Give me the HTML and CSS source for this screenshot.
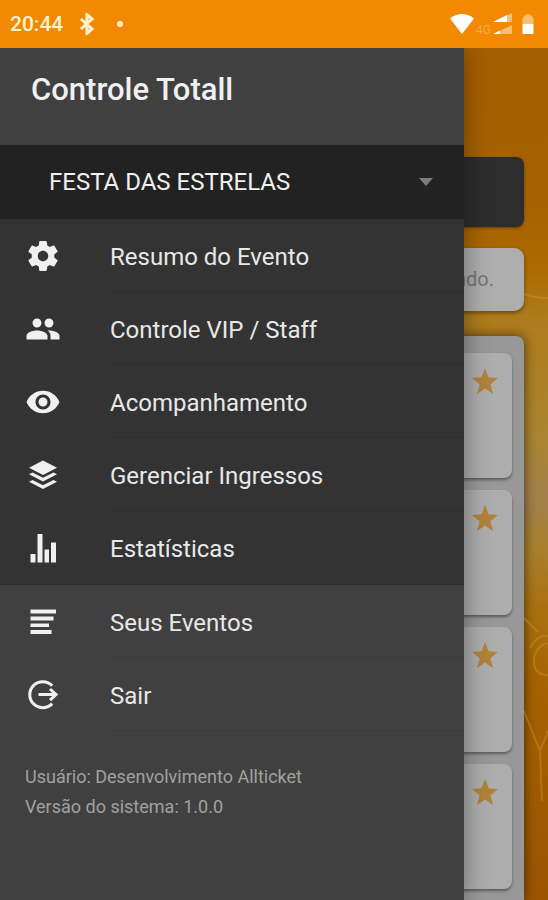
FILE: index.html
```html
<!DOCTYPE html>
<html lang="pt-BR">
<head>
<meta charset="utf-8">
<meta name="viewport" content="width=device-width, initial-scale=1">
<title>Controle Totall</title>
<link rel="stylesheet" href="styles.css">
</head>
<body>
<header class="status">
  <div class="status-left">
    <span class="clock">20:44</span>
    <svg class="bluetooth" viewBox="0 0 16 22"><path d="M2 6l11 10-5 4.500V1.500L13 6 2 16"/></svg>
    <span class="dot"></span>
  </div>
  <div class="status-right">
    <svg class="wifi" viewBox="0 0 24 20"><path d="M0 4.500C7-1.500 17-1.500 24 4.500L12 20z"/></svg>
    <span class="network">4G</span>
    <svg class="signal" viewBox="0 0 20 22"><g class="faint"><path d="M1 9L20 0v9z"/><path d="M1 21l19-9v9z"/></g><path d="M1 9l14-7V9z"/><path d="M1 21l7-3.500V21z"/></svg>
    <svg class="battery" viewBox="0 0 11 20"><path class="faint" d="M0 5q0-2 3-4 2.500-2 5 0 3 2 3 4v5H0z"/><path d="M0 10h11v10H0z"/></svg>
  </div>
</header>
<div class="stage">
  <main class="page">
    <svg class="sparks" viewBox="0 0 24 852" preserveAspectRatio="none"><path d="M0 246q12 4 24 4M0 663l16 40 2 50M16 703l8-20M24 595q-14 4-14 18t14 14M0 570l14 14M6 600q8-14 18-12"/></svg>
    <div class="banner"></div>
    <div class="notice">ndo.</div>
    <section class="list">
      <article class="card"><svg class="star" viewBox="0 0 26 26"><path d="M13 0l3.600 9.300L26 10l-7.500 6.300L21 26l-8-5.400L5 26l2.500-9.700L0 10l9.400-.7z"/></svg></article>
      <article class="card"><svg class="star" viewBox="0 0 26 26"><path d="M13 0l3.600 9.300L26 10l-7.500 6.300L21 26l-8-5.400L5 26l2.500-9.700L0 10l9.400-.7z"/></svg></article>
      <article class="card"><svg class="star" viewBox="0 0 26 26"><path d="M13 0l3.600 9.300L26 10l-7.500 6.300L21 26l-8-5.400L5 26l2.500-9.700L0 10l9.400-.7z"/></svg></article>
      <article class="card"><svg class="star" viewBox="0 0 26 26"><path d="M13 0l3.600 9.300L26 10l-7.500 6.300L21 26l-8-5.400L5 26l2.500-9.700L0 10l9.400-.7z"/></svg></article>
    </section>
  </main>
  <aside class="drawer">
    <h1 class="title">Controle Totall</h1>
    <div class="picker">
      <select class="event" aria-label="Evento"><option>FESTA DAS ESTRELAS</option></select>
      <svg class="caret" viewBox="0 0 14 8"><path d="M0 0h14L7 8z"/></svg>
    </div>
    <nav>
      <div class="group event-group">
        <a class="item" href="#resumo"><svg class="icon" viewBox="0 0 24 24"><path d="M19.430 12.980c.040-.320.070-.640.070-.980s-.030-.660-.070-.980l2.110-1.650c.190-.150.240-.420.120-.640l-2-3.460c-.120-.220-.390-.300-.610-.220l-2.490 1c-.520-.400-1.080-.730-1.690-.980l-.380-2.650C14.460 2.180 14.250 2 14 2h-4c-.250 0-.460.180-.490.420l-.380 2.650c-.610.250-1.170.590-1.690.980l-2.490-1c-.230-.090-.490 0-.610.220l-2 3.460c-.130.220-.070.490.120.640l2.110 1.650c-.040.320-.070.650-.070.980s.030.660.070.980l-2.110 1.650c-.190.150-.240.420-.120.640l2 3.460c.120.220.390.300.610.220l2.490-1c.520.400 1.080.730 1.690.980l.380 2.650c.030.240.240.420.490.420h4c.250 0 .460-.180.490-.420l.380-2.650c.610-.250 1.170-.590 1.690-.980l2.490 1c.230.090.490 0 .610-.220l2-3.460c.120-.220.070-.490-.120-.640l-2.110-1.650zM12 15.500c-1.930 0-3.500-1.570-3.500-3.500s1.570-3.500 3.500-3.500 3.500 1.570 3.500 3.500-1.570 3.500-3.500 3.500z"/></svg><span class="label">Resumo do Evento</span></a>
        <a class="item" href="#vip"><svg class="icon" viewBox="0 0 24 24"><path d="M16 11c1.660 0 2.990-1.340 2.990-3S17.660 5 16 5s-3 1.340-3 3 1.340 3 3 3zm-8 0c1.660 0 2.990-1.340 2.990-3S9.660 5 8 5 5 6.340 5 8s1.340 3 3 3zm0 2c-2.330 0-7 1.170-7 3.500V19h14v-2.500c0-2.330-4.670-3.500-7-3.500zm8 0c-.290 0-.620.020-.970.050 1.160.840 1.970 1.970 1.970 3.450V19h6v-2.500c0-2.330-4.670-3.500-7-3.500z"/></svg><span class="label">Controle VIP / Staff</span></a>
        <a class="item" href="#acompanhamento"><svg class="icon" viewBox="0 0 24 24"><path d="M12 4.500C7 4.500 2.730 7.610 1 12c1.730 4.390 6 7.500 11 7.500s9.270-3.110 11-7.500c-1.730-4.390-6-7.500-11-7.500zM12 17c-2.760 0-5-2.240-5-5s2.240-5 5-5 5 2.240 5 5-2.240 5-5 5zm0-8c-1.660 0-3 1.340-3 3s1.340 3 3 3 3-1.340 3-3-1.340-3-3-3z"/></svg><span class="label">Acompanhamento</span></a>
        <a class="item" href="#ingressos"><svg class="icon" viewBox="0 0 36 36"><path d="M18 3.500l14 7.200L18 18 4 10.700zM4 17.300l3.500-1.800L18 20.800l10.500-5.300 3.500 1.800-14 7.200zM4 24.800L7.500 23 18 28.300 28.500 23l3.500 1.800L18 32z"/></svg><span class="label">Gerenciar Ingressos</span></a>
        <a class="item last" href="#estatisticas"><svg class="icon" viewBox="0 0 36 36"><path d="M5.500 24h5v8.500h-5zM12.500 4h5v28.500h-5zM19.500 19.500h4.500v13h-4.500zM26 12.500h5v20h-5z"/></svg><span class="label">Estatísticas</span></a>
      </div>
      <div class="group">
        <a class="item" href="#eventos"><svg class="icon" viewBox="0 0 36 36"><path d="M5.500 5.500H31v4H5.500zM5.500 12.500h23v4h-23zM5.500 19.500H24V23H5.500zM5.500 26h21v4h-21z"/></svg><span class="label">Seus Eventos</span></a>
        <a class="item" href="#sair"><svg class="icon line" viewBox="0 0 36 36"><path d="M27.200 8.700a13 13 0 1 0 0 17.900M13.500 17.600h16M25 12l6 5.600-6 5.600"/></svg><span class="label">Sair</span></a>
      </div>
    </nav>
    <footer class="about">
      <p>Usuário: Desenvolvimento Allticket</p>
      <p>Versão do sistema: 1.0.0</p>
    </footer>
  </aside>
</div>
</body>
</html>
```
FILE: styles.css
```css
* { box-sizing: border-box; }

body {
  margin: 0;
  min-height: 100vh;
  display: flex;
  flex-direction: column;
  font-family: Roboto, "Liberation Sans", sans-serif;
  background: #404040;
}

svg { display: block; fill: currentColor; }

.status {
  height: 48px;
  padding: 0 14px 0 10px;
  display: flex;
  align-items: center;
  justify-content: space-between;
  background: #f38900;
  color: #fff;
}
.status-left, .status-right { display: flex; align-items: center; }
.clock { font-size: 21px; font-weight: 500; color: #fff3cf; }
.bluetooth {
  width: 16px;
  height: 22px;
  margin: 0 22px 0 16px;
  fill: none;
  stroke: #fff3cf;
  stroke-width: 3;
}
.dot { width: 6px; height: 6px; border-radius: 50%; background: #fff3cf; }
.wifi { width: 24px; height: 20px; }
.network { margin: 12px 1px 0 2px; font-size: 12px; line-height: 14px; color: #f7a747; }
.signal { width: 20px; height: 22px; margin-right: 10px; }
.battery { width: 12px; height: 20px; }
.faint { opacity: .45; }

.stage { position: relative; flex: 1; display: flex; overflow: hidden; }

.page {
  position: relative;
  flex: 1;
  display: flex;
  flex-direction: column;
  padding: 109px 24px 0;
  background: linear-gradient(#a65f00 0, #a66100 150px, #ac6a00 220px, #ae7c1c 270px, #aa8430 390px, #a2804c 450px, #a8802e 500px, #aa7010 560px, #a56200 640px, #9b5300 100%);
}
.sparks {
  position: absolute;
  top: 0;
  right: 0;
  width: 24px;
  height: 100%;
  fill: none;
  stroke: #c79a2c;
  stroke-width: 2;
  opacity: .4;
}
.banner { height: 70px; border-radius: 8px; background: #2d2d2d; box-shadow: 0 1px 3px #0006; }
.notice {
  height: 63px;
  margin-top: 21px;
  padding-right: 30px;
  border-radius: 10px;
  background: #aeaeae;
  box-shadow: 0 2px 4px #0006;
  font-size: 20px;
  line-height: 63px;
  text-align: right;
  color: #757575;
}
.list {
  flex: 1;
  display: flex;
  flex-direction: column;
  gap: 12px;
  margin-top: 25px;
  padding: 17px 12px 11px;
  border-radius: 8px 8px 0 0;
  background: #989898;
  box-shadow: 0 0 12px #0009;
}
.card {
  height: 125px;
  padding: 15px 14px;
  display: flex;
  justify-content: flex-end;
  border-radius: 8px;
  background: #adadad;
  box-shadow: 0 2px 3px #0006;
}
.star { width: 26px; height: 26px; color: #b1823a; }

.drawer {
  position: absolute;
  inset: 0 84px 0 0;
  background: #404040;
  color: #e8e8e8;
  box-shadow: 0 0 24px #0006;
}
.title {
  margin: 0;
  height: 97px;
  padding: 24px 31px;
  font-size: 31px;
  line-height: 36px;
  font-weight: 500;
  color: #f0f0f0;
}
.picker { display: grid; align-items: center; background: #222; }
.picker > * { grid-area: 1 / 1; }
.event {
  appearance: none;
  width: 100%;
  height: 74px;
  padding: 0 64px 0 49px;
  border: 0;
  background: none;
  color: #f0f0f0;
  font: 24px Roboto, "Liberation Sans", sans-serif;
}
.caret {
  justify-self: end;
  width: 14px;
  height: 8px;
  margin-right: 31px;
  color: #7c7c7c;
  pointer-events: none;
}

.event-group { background: #333; border-bottom: 1px solid #2d2d2d; }
.item {
  height: 73px;
  padding-left: 25px;
  display: flex;
  align-items: center;
  gap: 49px;
  color: inherit;
  text-decoration: none;
}
.icon { flex: none; width: 36px; height: 36px; color: #f0f0f0; }
.line { fill: none; stroke: currentColor; stroke-width: 3; }
.label {
  flex: 1;
  height: 73px;
  border-bottom: 1px solid #2e2e2e;
  font-size: 24px;
  line-height: 76px;
}
.group:last-child .label { border-color: #3b3b3b; }
.last .label { border: 0; }

.about { padding: 31px 25px; font-size: 18px; line-height: 30px; color: #a0a0a0; }
.about p { margin: 0; }
```
